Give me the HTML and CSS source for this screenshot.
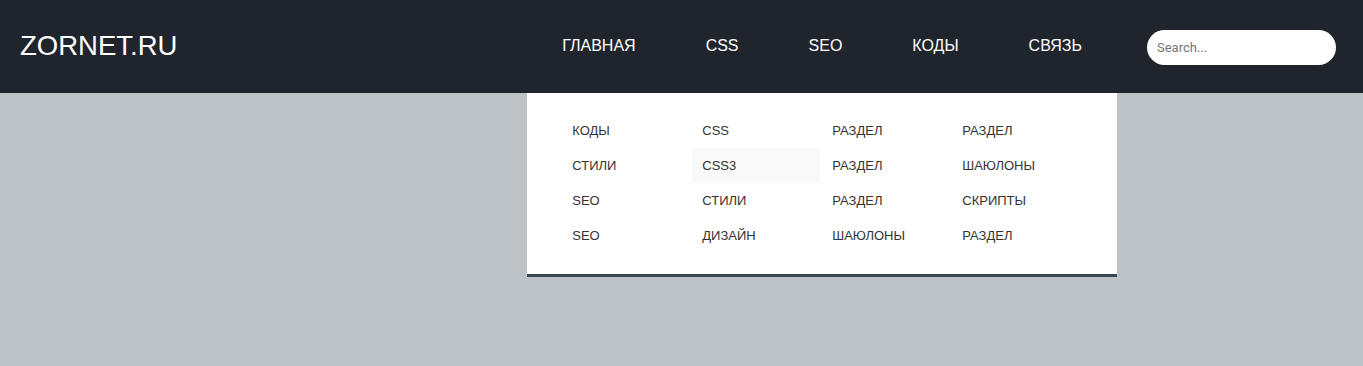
FILE: index.html
```html
<!DOCTYPE html>
<html lang="ru">
<head>
<meta charset="utf-8">
<title>ZORNET.RU</title>
<link rel="stylesheet" href="styles.css">
</head>
<body>
<header class="header">
  <a class="logo" href="#">ZORNET.RU</a>
  <nav class="nav">
    <ul class="menu">
      <li class="menu-item"><a href="#">ГЛАВНАЯ</a></li>
      <li class="menu-item"><a href="#">CSS</a></li>
      <li class="menu-item"><a href="#">SEO</a></li>
      <li class="menu-item"><a href="#">КОДЫ</a></li>
      <li class="menu-item"><a href="#">СВЯЗЬ</a></li>
    </ul>
    <div class="dropdown">
      <ul class="col">
        <li><a href="#">КОДЫ</a></li>
        <li><a href="#">СТИЛИ</a></li>
        <li><a href="#">SEO</a></li>
        <li><a href="#">SEO</a></li>
      </ul>
      <ul class="col">
        <li><a href="#">CSS</a></li>
        <li><a class="hover" href="#">CSS3</a></li>
        <li><a href="#">СТИЛИ</a></li>
        <li><a href="#">ДИЗАЙН</a></li>
      </ul>
      <ul class="col">
        <li><a href="#">РАЗДЕЛ</a></li>
        <li><a href="#">РАЗДЕЛ</a></li>
        <li><a href="#">РАЗДЕЛ</a></li>
        <li><a href="#">ШАЮЛОНЫ</a></li>
      </ul>
      <ul class="col">
        <li><a href="#">РАЗДЕЛ</a></li>
        <li><a href="#">ШАЮЛОНЫ</a></li>
        <li><a href="#">СКРИПТЫ</a></li>
        <li><a href="#">РАЗДЕЛ</a></li>
      </ul>
    </div>
  </nav>
  <input class="search" type="text" placeholder="Search...">
</header>
</body>
</html>
```

FILE: styles.css
```css
html, body {
  margin: 0;
  padding: 0;
}
body {
  background: #bec3c8;
  font-family: "Liberation Sans", Arial, sans-serif;
  height: 366px;
  overflow: hidden;
}
a {
  text-decoration: none;
  color: inherit;
}
ul {
  list-style: none;
  margin: 0;
  padding: 0;
}
.header {
  display: flex;
  align-items: center;
  height: 93px;
  background: #1f242d;
}
.logo {
  margin-left: 20px;
  color: #fff;
  font-size: 27.5px;
  line-height: 1;
  margin-top: -2px;
}
.nav {
  position: relative;
  margin-left: auto;
  height: 93px;
}
.menu {
  display: flex;
  height: 100%;
}
.menu-item a {
  display: block;
  padding: 0 35px;
  line-height: 91px;
  color: #fff;
  font-size: 16px;
}
.dropdown {
  position: absolute;
  top: 100%;
  left: 0;
  right: 0;
  background: #fff;
  display: grid;
  grid-template-columns: repeat(4, 130px);
  padding: 20px 35px 21px;
  border-bottom: 3px solid #3a4650;
  z-index: 5;
}
.col li a {
  display: block;
  height: 35px;
  line-height: 35px;
  padding: 0 10px;
  font-size: 13px;
  color: #333;
}
.col li a.hover {
  background: #f9f9f9;
  margin-right: 2px;
}
.search {
  margin-left: 30px;
  margin-right: 27px;
  margin-top: 1px;
  width: 189px;
  height: 35px;
  box-sizing: border-box;
  border: none;
  border-radius: 18px;
  padding: 0 10px;
  background: #fff;
  font-family: "Roboto", "Liberation Sans", sans-serif;
  font-size: 13px;
  color: #333;
  outline: none;
}
.search::placeholder {
  color: #757575;
}
```
